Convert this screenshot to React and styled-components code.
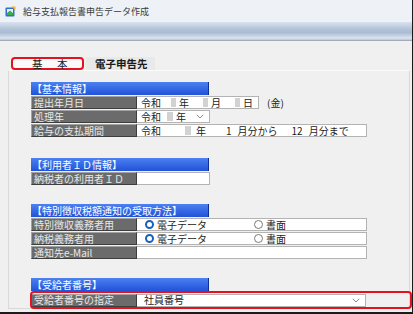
import React from 'react'
import styled, { createGlobalStyle } from 'styled-components'

const Global = createGlobalStyle`
  body {
    margin: 0;
    background: #ffffff;
  }
  * {
    box-sizing: border-box;
  }
`

const Window = styled.div`
  width: 413px;
  height: 314px;
  display: flex;
  flex-direction: column;
  border-right: 1px solid #1b1b1b;
  border-bottom: 2px solid #1b1b1b;
  font-family: "Noto Sans CJK JP", "Noto Sans", sans-serif;
  overflow: hidden;
`

const TitleBar = styled.div`
  height: 22px;
  display: flex;
  align-items: center;
  gap: 7px;
  padding-left: 5px;
  background: #eef2f6;
  color: #3a3a3a;
  font-size: 9px;
`

const Band = styled.div`
  height: 19px;
  background: linear-gradient(#d9e3ee 0%, #b4c5d9 35%, #a9bcd3 55%, #dbe4ee 85%, #c7cfd8 92%, #8f9aa6 100%);
`

const Body = styled.div`
  flex: 1;
  display: flex;
  flex-direction: column;
  background: #f0f0f0;
  padding: 16px 2px 3px 8px;
`

const TabRow = styled.div`
  display: flex;
  height: 13px;
  padding-left: 3px;
`

const Tab = styled.div`
  height: 13px;
  display: flex;
  align-items: center;
  font-size: 10.5px;
  color: #1a1a1a;
  ${p => p.$active ? `
    width: 73px;
    border: 2px solid #e3121e;
    border-radius: 4px;
    background: #fafafa;
    padding-left: 19px;
    letter-spacing: 2px;
  ` : `
    width: 69px;
    margin-left: 2px;
    background: #e9e9e9;
    padding-left: 9px;
    font-weight: 700;
  `}
`

const Panel = styled.div`
  flex: 1;
  border: 1px solid #d9d9d9;
  border-top-color: #fbfbfb;
  padding: 11px 0 0 22px;
`

const Header = styled.div`
  width: 178px;
  height: 13px;
  margin-top: ${p => p.$gap || 0}px;
  display: flex;
  align-items: center;
  padding-left: 1px;
  background: linear-gradient(#4d80f0, #2152d9);
  border-right: 1px solid #0d2f96;
  color: #ffffff;
  font-size: 10px;
  line-height: 1;
`

const Row = styled.div`
  display: flex;
  align-items: center;
  height: 13px;
  margin-top: 1px;
`

const Label = styled.div`
  width: 106px;
  height: 13px;
  display: flex;
  align-items: center;
  padding-left: 2px;
  background: #6b6b6b;
  border-top: 1px solid #a2a2a2;
  border-left: 1px solid #a2a2a2;
  border-bottom: 1px solid #3d3d3d;
  border-right: 1px solid #3d3d3d;
  color: #e8e8e8;
  font-size: 10px;
  line-height: 1;
  white-space: nowrap;
`

const Value = styled.div`
  width: ${p => p.$w}px;
  height: 13px;
  display: flex;
  align-items: center;
  padding-left: ${p => p.$pad ?? 4}px;
  padding-right: 5px;
  background: #ffffff;
  border: 1px solid #b3b3b3;
  border-left: none;
  color: #1c1c1c;
  font-size: 10px;
  line-height: 1;
  white-space: nowrap;
`

const Txt = styled.span`
  margin-left: ${p => p.$ml || 0}px;
`

const Blur = styled.span`
  display: inline-block;
  width: ${p => p.$w || 6}px;
  height: 9px;
  margin-left: ${p => p.$ml || 0}px;
  background: #d2d2d2;
  filter: blur(0.7px);
`

const Outside = styled.span`
  margin-left: 8px;
  font-size: 10px;
  color: #1c1c1c;
`

const Chevron = styled.svg`
  margin-left: auto;
  flex-shrink: 0;
`

const RadioDot = styled.span`
  width: 9px;
  height: 9px;
  border-radius: 50%;
  flex-shrink: 0;
  margin-left: ${p => p.$ml || 0}px;
  margin-right: 3px;
  background: #ffffff;
  border: ${p => p.$on ? '2.5px solid #1562bd' : '1px solid #7a7a7a'};
`

const Highlight = styled.div`
  position: relative;
  &::after {
    content: "";
    position: absolute;
    top: -2px;
    bottom: -2px;
    left: -1px;
    right: -3px;
    border: 2px solid #e3121e;
    border-radius: 4px;
    pointer-events: none;
  }
`

const TallRow = styled(Row)`
  height: 14px;
  margin-top: 2px;
`

const AppIcon = () => (
  <svg width="11" height="11" viewBox="0 0 11 11">
    <rect x="0.5" y="1.5" width="9" height="9" rx="1" fill="#2f6fcf" />
    <rect x="2" y="3" width="6" height="6" fill="#e8f1fb" />
    <path d="M2 7 L5 4.5 L8 7 L8 9 L2 9 Z" fill="#3fae4a" />
    <path d="M6 0.5 L10.5 0.5 L10.5 4 Z" fill="#f1b31c" />
  </svg>
)

const Down = () => (
  <Chevron width="8" height="5" viewBox="0 0 8 5">
    <path d="M0.8 0.8 L4 4 L7.2 0.8" fill="none" stroke="#8a8a8a" strokeWidth="1" />
  </Chevron>
)

const Radio = ({ on, ml, children }) => (
  <>
    <RadioDot $on={on} $ml={ml} />
    <Txt>{children}</Txt>
  </>
)

export default function App() {
  return (
    <Window>
      <Global />
      <TitleBar>
        <AppIcon />
        <span>給与支払報告書申告データ作成</span>
      </TitleBar>
      <Band />
      <Body>
        <TabRow>
          <Tab $active>基　本</Tab>
          <Tab>電子申告先</Tab>
        </TabRow>
        <Panel>
          <Header>【基本情報】</Header>
          <Row>
            <Label>提出年月日</Label>
            <Value $w={122}>
              <Txt>令和</Txt>
              <Blur $ml={10} />
              <Txt $ml={3}>年</Txt>
              <Blur $ml={14} />
              <Txt $ml={3}>月</Txt>
              <Blur $ml={14} />
              <Txt $ml={3}>日</Txt>
            </Value>
            <Outside>(金)</Outside>
          </Row>
          <Row>
            <Label>処理年</Label>
            <Value $w={73}>
              <Txt>令和</Txt>
              <Blur $ml={6} />
              <Txt $ml={3}>年</Txt>
              <Down />
            </Value>
          </Row>
          <Row>
            <Label>給与の支払期間</Label>
            <Value $w={230}>
              <Txt>令和</Txt>
              <Blur $ml={24} />
              <Txt $ml={5}>年</Txt>
              <Txt $ml={20}>1</Txt>
              <Txt $ml={6}>月分から</Txt>
              <Txt $ml={14}>12</Txt>
              <Txt $ml={6}>月分まで</Txt>
            </Value>
          </Row>

          <Header $gap={21}>【利用者ＩＤ情報】</Header>
          <Row>
            <Label>納税者の利用者ＩＤ</Label>
            <Value $w={73} />
          </Row>

          <Header $gap={19}>【特別徴収税額通知の受取方法】</Header>
          <Row>
            <Label>特別徴収義務者用</Label>
            <Value $w={230} $pad={8}>
              <Radio on>電子データ</Radio>
              <Radio ml={47}>書面</Radio>
            </Value>
          </Row>
          <Row>
            <Label>納税義務者用</Label>
            <Value $w={230} $pad={8}>
              <Radio on>電子データ</Radio>
              <Radio ml={47}>書面</Radio>
            </Value>
          </Row>
          <Row>
            <Label>通知先e-Mail</Label>
            <Value $w={230} />
          </Row>

          <Header $gap={19}>【受給者番号】</Header>
          <Highlight>
            <TallRow>
              <Label>受給者番号の指定</Label>
              <Value $w={229} $pad={7}>
                <Txt>社員番号</Txt>
                <Down />
              </Value>
            </TallRow>
          </Highlight>
        </Panel>
      </Body>
    </Window>
  )
}
